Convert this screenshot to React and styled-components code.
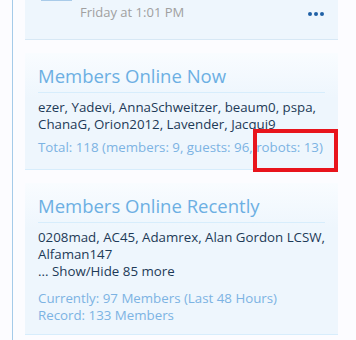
import React from 'react';
import styled, { createGlobalStyle } from 'styled-components';

const GlobalStyle = createGlobalStyle`
    body {
        margin: 0;
        background: #fcfcff;
        font-family: "Open Sans", "DejaVu Sans", sans-serif;
    }
`

const Page = styled.div`
    width: 356px;
    height: 340px;
    overflow: hidden;
    padding-left: 12px;
    box-sizing: border-box;
`

const Sidebar = styled.div`
    width: 326px;
    min-height: 340px;
    border-left: 1px solid #a5cbe9;
    padding-left: 12px;
    box-sizing: border-box;
    display: flex;
    flex-direction: column;
    gap: 13px;
`

const PostCard = styled.div`
    height: 40px;
    background: #eef6fd;
    border-bottom: 1px solid #d7e8f5;
    box-sizing: border-box;
    position: relative;
    display: flex;
    align-items: flex-start;
    justify-content: space-between;
    padding: 3px 14px 0 55px;
`

const AvatarEdge = styled.div`
    position: absolute;
    top: 0;
    left: 16px;
    width: 31px;
    height: 1px;
    background: #a9cbe9;
`

const DateText = styled.span`
    font-size: 13px;
    color: #a0a0a0;
`

const More = styled.span`
    display: flex;
    gap: 2px;
    margin-top: 9px;
    span {
        width: 4px;
        height: 4px;
        border-radius: 50%;
        background: #2061a6;
    }
`

const Section = styled.div`
    background: linear-gradient(#f9fcff, #eef6fd 45px);
    border-bottom: 1px solid #d7edfc;
    padding: 11px 13px ${props => props.bottom || 10}px 13px;
    position: relative;
`

const Heading = styled.h3`
    margin: 0 0 6px 0;
    padding-bottom: 5px;
    font-size: 18.5px;
    font-weight: 400;
    color: #6cafe3;
    border-bottom: 1px solid #d7edfc;
    line-height: 23px;
    white-space: nowrap;
`

const Names = styled.div`
    font-size: 13.3px;
    line-height: 17px;
    color: #1d3a57;
    margin-right: -8px;
`

const Footnote = styled.div`
    font-size: 13.3px;
    line-height: 17px;
    color: #7cb3e3;
    margin-top: ${props => props.gap || 0}px;
    white-space: nowrap;
`

const Highlight = styled.div`
    position: absolute;
    left: 228px;
    top: 76px;
    width: 85px;
    height: 43px;
    border: 4px solid #e8141c;
    box-sizing: border-box;
`

const App = () => {
    return (
        <>
            <GlobalStyle/>
            <Page>
                <Sidebar>
                    <PostCard>
                        <AvatarEdge/>
                        <DateText>Friday at 1:01 PM</DateText>
                        <More><span/><span/><span/></More>
                    </PostCard>

                    <Section bottom={13}>
                        <Heading>Members Online Now</Heading>
                        <Names>ezer, Yadevi, AnnaSchweitzer, beaum0, pspa, ChanaG, Orion2012, Lavender, Jacqui9</Names>
                        <Footnote gap={6}>Total: 118 (members: 9, guests: 96, robots: 13)</Footnote>
                        <Highlight/>
                    </Section>

                    <Section bottom={10}>
                        <Heading>Members Online Recently</Heading>
                        <Names>0208mad, AC45, Adamrex, Alan Gordon LCSW, Alfaman147</Names>
                        <Names>... Show/Hide 85 more</Names>
                        <Footnote gap={10}>Currently: 97 Members (Last 48 Hours)<br/>Record: 133 Members</Footnote>
                    </Section>
                </Sidebar>
            </Page>
        </>
    )
}

export default App;
